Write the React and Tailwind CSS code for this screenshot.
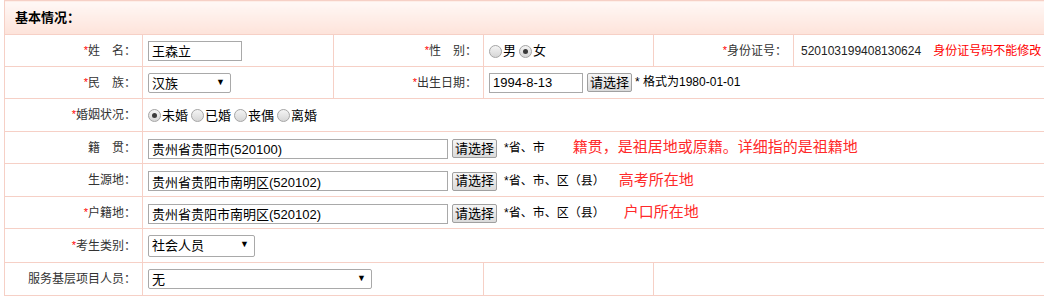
import React from "react";

const Star = () => <span className="text-[#ff0000] text-[11px] align-top">*</span>;

const Label = ({ req, children }) => (
  <td className="border border-[#f6d0c6] text-right pr-[6px] text-[#333] whitespace-nowrap">
    {req && <Star />}
    {children}
  </td>
);

const Radio = ({ checked, label }) => (
  <span className="inline-flex items-center mr-[3px] align-middle">
    <span className="w-[13px] h-[13px] rounded-full border border-[#a6a6a6] bg-gradient-to-b from-[#f4f4f4] to-[#d6d6d6] inline-flex items-center justify-center">
      {checked && <span className="w-[5px] h-[5px] rounded-full bg-[#3a3a3a]" />}
    </span>
    <span className="ml-[1px] text-[13px] leading-[16px] text-black">{label}</span>
  </span>
);

const TextBox = ({ value, w }) => (
  <input
    readOnly
    value={value}
    className="h-[20px] border border-[#a9a9a9] px-[3px] text-[13px] text-black outline-none align-middle"
    style={{ width: w }}
  />
);

const PickBtn = () => (
  <button className="h-[19px] ml-[4px] px-[2px] border border-[#a0a0a0] rounded-[2px] bg-gradient-to-b from-[#f6f6f6] to-[#dadada] text-[13px] leading-[16px] text-black align-middle">
    请选择
  </button>
);

const Sel = ({ value, w, h = 20 }) => (
  <span className="relative inline-block align-middle" style={{ width: w, height: h }}>
    <select
      className="appearance-none w-full h-full border border-[#a9a9a9] rounded-[2px] bg-white pl-[3px] text-[13px] text-black outline-none"
      defaultValue={value}
    >
      <option>{value}</option>
    </select>
    <span className="absolute right-[6px] top-[3px] text-[9px] text-black pointer-events-none">▼</span>
  </span>
);

const Val = ({ span = 1, children }) => (
  <td colSpan={span} className="border border-[#f6d0c6] pl-[5px] text-[12px] text-black whitespace-nowrap">
    {children}
  </td>
);

export default function App() {
  return (
    <div className="w-[1044px] h-[297px] overflow-hidden bg-white pl-[4px]" style={{ fontFamily: '"Liberation Sans", "Noto Sans CJK SC", sans-serif' }}>
      <table className="table-fixed border-collapse w-[1060px] min-w-[1060px] text-[12px]">
        <colgroup>
          <col className="w-[138px]" />
          <col className="w-[191px]" />
          <col className="w-[150px]" />
          <col className="w-[170px]" />
          <col className="w-[140px]" />
          <col className="w-[271px]" />
        </colgroup>
        <tbody>
          <tr className="h-[34px]">
            <td colSpan={6} className="border border-[#f6d0c6] bg-gradient-to-b from-[#fff8f6] to-[#fde3da] pl-[10px] text-[13px] font-bold text-black">
              基本情况：
            </td>
          </tr>
          <tr className="h-[32px]">
            <Label req>姓　名：</Label>
            <Val><TextBox value="王森立" w={94} /></Val>
            <Label req>性　别：</Label>
            <Val>
              <Radio label="男" />
              <Radio checked label="女" />
            </Val>
            <Label req>身份证号：</Label>
            <Val>
              <span className="ml-[2px] text-[12px] text-[#222]">520103199408130624</span>
              <span className="ml-[12px] text-[12px] text-[#ff0000]">身份证号码不能修改</span>
            </Val>
          </tr>
          <tr className="h-[32px]">
            <Label req>民　族：</Label>
            <Val><Sel value="汉族" w={83} h={20} /></Val>
            <Label req>出生日期：</Label>
            <Val span={3}>
              <TextBox value="1994-8-13" w={94} />
              <PickBtn />
              <span className="ml-[3px]">* 格式为1980-01-01</span>
            </Val>
          </tr>
          <tr className="h-[33px]">
            <Label req>婚姻状况：</Label>
            <Val span={5}>
              <Radio checked label="未婚" />
              <Radio label="已婚" />
              <Radio label="丧偶" />
              <Radio label="离婚" />
            </Val>
          </tr>
          <tr className="h-[32px]">
            <Label>籍　贯：</Label>
            <Val span={5}>
              <TextBox value="贵州省贵阳市(520100)" w={300} />
              <PickBtn />
              <span className="ml-[7px]">*省、市</span>
              <span className="ml-[28px] text-[15px] text-[#ff2a2a]">籍贯，是祖居地或原籍。详细指的是祖籍地</span>
            </Val>
          </tr>
          <tr className="h-[33px]">
            <Label>生源地：</Label>
            <Val span={5}>
              <TextBox value="贵州省贵阳市南明区(520102)" w={300} />
              <PickBtn />
              <span className="ml-[7px]">*省、市、区（县）</span>
              <span className="ml-[14px] text-[15px] text-[#ff2a2a]">高考所在地</span>
            </Val>
          </tr>
          <tr className="h-[32px]">
            <Label req>户籍地：</Label>
            <Val span={5}>
              <TextBox value="贵州省贵阳市南明区(520102)" w={300} />
              <PickBtn />
              <span className="ml-[7px]">*省、市、区（县）</span>
              <span className="ml-[19px] text-[15px] text-[#ff2a2a]">户口所在地</span>
            </Val>
          </tr>
          <tr className="h-[34px]">
            <Label req>考生类别：</Label>
            <Val span={5}><Sel value="社会人员" w={107} h={22} /></Val>
          </tr>
          <tr className="h-[33px]">
            <Label>服务基层项目人员：</Label>
            <Val span={2}><Sel value="无" w={224} h={20} /></Val>
            <td className="border border-[#f6d0c6]" />
            <td colSpan={2} className="border border-[#f6d0c6]" />
          </tr>
        </tbody>
      </table>
    </div>
  );
}
